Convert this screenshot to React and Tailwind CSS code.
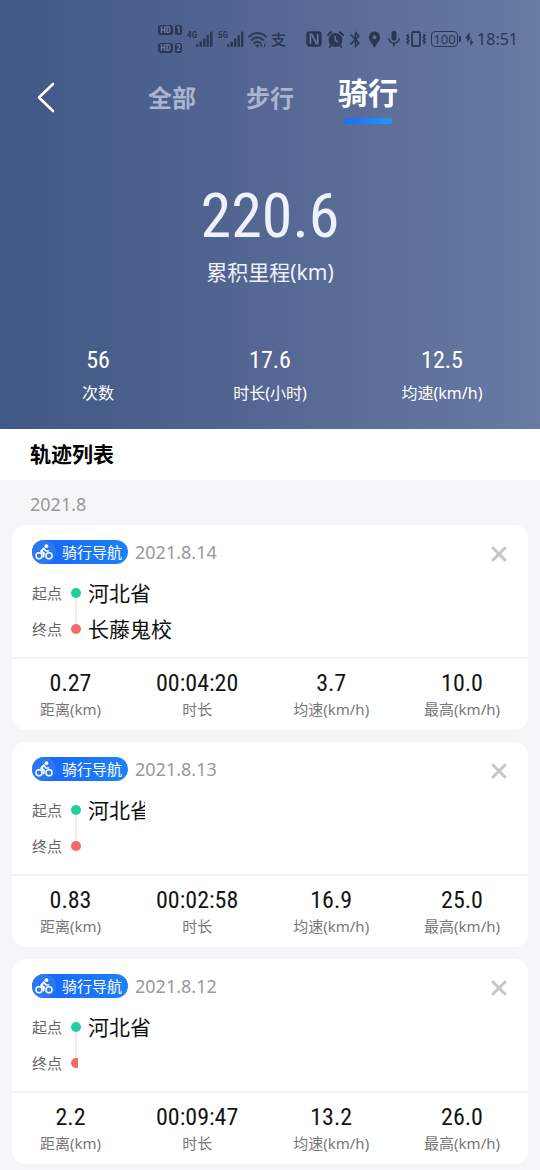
// src/pages/RideHistory.jsx
import React, { useState } from "react";
import { MdBluetooth, MdLocationPin, MdMic } from "react-icons/md";

const TABS = ["全部", "步行", "骑行"];

const TOTALS = [
  { value: "56", label: "次数" },
  { value: "17.6", label: "时长(小时)" },
  { value: "12.5", label: "均速(km/h)" },
];

const RIDES = [
  { date: "2021.8.14", from: "河北省", to: "长藤鬼校", distance: "0.27", time: "00:04:20", avg: "3.7", max: "10.0" },
  { date: "2021.8.13", from: "河北省", to: "", clipFrom: true, distance: "0.83", time: "00:02:58", avg: "16.9", max: "25.0" },
  { date: "2021.8.12", from: "河北省", to: "", clipDot: true, distance: "2.2", time: "00:09:47", avg: "13.2", max: "26.0" },
];

function HdBadge({ sim }) {
  return (
    <span className="flex gap-[2px] text-[9px] leading-[10px] font-bold text-[#6b7dab]">
      <span className="w-[15px] rounded-[3px] bg-[#2a3655] text-center font-['Roboto_Condensed',sans-serif]">HD</span>
      <span className="w-[7px] rounded-[2px] bg-[#2a3655] text-center font-['Roboto_Condensed',sans-serif]">{sim}</span>
    </span>
  );
}

function Signal({ type }) {
  return (
    <span className="flex items-start">
      <span className="w-[9px] font-['Roboto_Condensed',sans-serif] text-[9px] leading-[10px] font-bold">{type}</span>
      <svg width="17" height="18" viewBox="0 0 17 18" fill="currentColor">
        <rect x="0" y="14" width="2.4" height="3" rx="1" />
        <rect x="3.5" y="11.5" width="2.4" height="5.5" rx="1" />
        <rect x="7" y="8.5" width="2.4" height="8.5" rx="1" />
        <rect x="10.5" y="5" width="2.4" height="12" rx="1" />
        <rect x="14" y="1.5" width="2.4" height="15.5" rx="1" />
      </svg>
    </span>
  );
}

function StatusBar() {
  return (
    <div className="flex h-[62px] items-center justify-end pt-4 pr-[22px] text-[#2a3655]">
      <div className="flex flex-col gap-2">
        <HdBadge sim="1" />
        <HdBadge sim="2" />
      </div>
      <div className="ml-[5px] flex gap-[5px]">
        <Signal type="4G" />
        <Signal type="5G" />
      </div>
      <svg className="ml-1" width="19" height="17" viewBox="0 0 19 17" fill="none" stroke="currentColor" strokeWidth="2" strokeLinecap="round">
        <path d="M1.2 5.6C6 .8 13 .8 17.8 5.6M3.9 8.9c3.3-3.2 7.9-3.2 11.2 0M6.6 12c1.8-1.6 4-1.6 5.8 0" />
        <path d="M8.2 14.2h2.6l-1.3 1.6z" fill="currentColor" strokeWidth="1" />
        <path d="M14 12.4v4l-1.8-2zM16 12.4v4l1.8-2z" fill="currentColor" stroke="none" />
      </svg>
      <span className="ml-1 w-4 text-[15px] leading-4 font-medium">支</span>

      <svg className="ml-[19px]" width="16" height="16" viewBox="0 0 16 16">
        <rect x="0.3" y="0.3" width="15.4" height="15.4" rx="3.4" fill="currentColor" />
        <path d="M4.4 12.8V3.4h1.4l4.6 9.2h1.3V3.2" fill="none" stroke="#6576a2" strokeWidth="1.7" />
      </svg>
      <svg className="ml-[5px]" width="17" height="17" viewBox="0 0 17 17" fill="none" stroke="currentColor">
        <circle cx="8.5" cy="9" r="6.9" fill="currentColor" stroke="none" />
        <path d="M1 4.2C1.6 2.8 2.7 1.8 4.2 1.2M16 4.2c-.6-1.4-1.7-2.4-3.2-3M4.2 14l-1.6 2M12.8 14l1.6 2" strokeWidth="2" strokeLinecap="round" />
        <path d="M8.3 5v4.4l3 1.8" stroke="#6073a0" strokeWidth="1.5" />
      </svg>
      <MdBluetooth className="ml-[2px]" size={19} />
      <MdLocationPin size={19} />
      <MdMic size={20} />
      <svg className="ml-[2px]" width="20" height="16" viewBox="0 0 20 16" fill="none" stroke="currentColor" strokeWidth="1.8">
        <rect x="6" y="1" width="8" height="14" rx="1.5" />
        <path d="M2.5 3 1 4.6l1.8 1.7L1 8l1.8 1.7L1 11.4 2.5 13M17.5 3 19 4.6l-1.8 1.7L19 8l-1.8 1.7 1.8 1.7-1.5 1.6" strokeWidth="1.6" />
      </svg>
      <span className="ml-[5px] flex h-4 w-[27px] items-center justify-center rounded-[4px] border border-current text-[13px] leading-3">
        100
      </span>
      <span className="ml-px h-[6px] w-[2px] rounded-full bg-current" />
      <svg className="ml-1" width="9" height="16" viewBox="0 0 9 16" fill="currentColor">
        <path d="M4.4.8v5.4h2L1.6 11.4l.8-4H.2zM6.6 7v3.4h2.2L5 15.4l.8-3.6H4.4z" />
      </svg>
      <span className="ml-[3px] text-[16px] leading-5">18:51</span>
    </div>
  );
}

function Tabs({ active, onChange }) {
  return (
    <nav className="grid h-[66px] grid-cols-[1fr_auto_1fr] items-start">
      <button type="button" aria-label="返回" className="mt-5 ml-9 w-5">
        <svg width="20" height="31" viewBox="0 0 20 31" fill="none" stroke="#fff" strokeWidth="2.6" strokeLinecap="round" strokeLinejoin="round">
          <path d="M17 2 3 15.5 17 29" />
        </svg>
      </button>
      <div className="grid grid-cols-[98px_98px_98px]">
        {TABS.map((tab) => (
          <button key={tab} type="button" onClick={() => onChange(tab)} className="flex flex-col items-center pt-3">
            {tab === active ? (
              <>
                <span className="text-[30px] leading-[38px] font-bold text-white">{tab}</span>
                <span className="mt-[6px] h-[6px] w-12 rounded-[3px] bg-linear-to-r from-[#1f6bf8] to-[#2096fa]" />
              </>
            ) : (
              <span className="pt-1 text-[24px] leading-10 font-bold text-[#a9b5d3]">{tab}</span>
            )}
          </button>
        ))}
      </div>
    </nav>
  );
}

function CyclistIcon() {
  return (
    <svg width="18" height="16" viewBox="0 0 18 16" fill="none" stroke="currentColor" strokeLinecap="round" strokeLinejoin="round">
      <circle cx="4" cy="11.8" r="3" strokeWidth="1.5" />
      <circle cx="14" cy="11.8" r="3" strokeWidth="1.5" />
      <circle cx="11.4" cy="2.2" r="1.9" fill="currentColor" stroke="none" />
      <path d="M8.8 4.4 6.2 7.2l2.7 2.2-.4 3" strokeWidth="2" />
      <path d="M9.2 4.8 11 7h2.6" strokeWidth="1.5" />
    </svg>
  );
}

function Stat({ value, label }) {
  return (
    <div className="flex min-w-[60px] flex-col items-center">
      <span className="font-['Roboto_Condensed',sans-serif] text-[24px] leading-8 text-[#151515]">{value}</span>
      <span className="text-[15px] leading-5 text-[#777]">{label}</span>
    </div>
  );
}

function RideCard({ ride, onRemove }) {
  return (
    <li className="rounded-[14px] bg-white">
      <div className="flex h-[39px] items-center px-5 pt-[15px]">
        <span className="flex h-6 w-24 items-center rounded-full bg-linear-to-r from-[#1b62fb] to-[#1d82f6] text-white">
          <span className="flex h-6 w-6 items-center justify-center rounded-full bg-[#2b78f3]">
            <CyclistIcon />
          </span>
          <span className="ml-[6px] text-[15px] leading-6">骑行导航</span>
        </span>
        <span className="ml-[7px] text-[18px] leading-6 text-[#999]">{ride.date}</span>
        <button type="button" aria-label="删除" onClick={onRemove} className="mt-1 ml-auto">
          <svg width="18" height="18" viewBox="0 0 18 18" stroke="#c6c6c6" strokeWidth="3" strokeLinecap="round">
            <path d="M3 3l12 12M15 3 3 15" />
          </svg>
        </button>
      </div>

      {/* 起点 / 终点 */}
      <div className="mt-[11px] flex px-5 pb-[10px]">
        <div className="w-[30px] text-[15px] leading-9 text-[#666]">
          <p>起点</p>
          <p>终点</p>
        </div>
        <div className="ml-[9px] flex w-[10px] flex-col items-center py-[13px]">
          <span className="h-[10px] w-[10px] rounded-full bg-[#20cf9b]" />
          <span className="w-[2px] flex-1 bg-[#eee]" />
          <span className="h-[10px] w-[10px] overflow-hidden">
            <span className={`block h-full bg-[#f46a6a] ${ride.clipDot ? "w-[7px] rounded-l-full" : "w-full rounded-full"}`} />
          </span>
        </div>
        <div className="ml-[7px] text-[21px] leading-9 text-[#111]">
          <p className={`overflow-hidden whitespace-nowrap ${ride.clipFrom ? "w-[57px]" : ""}`}>{ride.from}</p>
          <p>{ride.to}</p>
        </div>
      </div>

      <div className="flex justify-between border-t-2 border-[#f3f3f5] px-7 pt-2 pb-[11px]">
        <Stat value={ride.distance} label="距离(km)" />
        <Stat value={ride.time} label="时长" />
        <Stat value={ride.avg} label="均速(km/h)" />
        <Stat value={ride.max} label="最高(km/h)" />
      </div>
    </li>
  );
}

export default function App() {
  const [tab, setTab] = useState("骑行");
  const [rides, setRides] = useState(RIDES);

  return (
    <div className="min-h-screen bg-[#f5f6f8] font-['Noto_Sans','Noto_Sans_CJK_SC',sans-serif]">
      <header className="bg-linear-to-r from-[#405885] via-[#556792] to-[#687ba3] pb-[21px]">
        <StatusBar />
        <Tabs active={tab} onChange={setTab} />

        <div className="flex flex-col items-center pt-[50px] text-[#eef2fc]">
          <span className="font-['Roboto_Condensed',sans-serif] text-[62px] leading-[76px]">220.6</span>
          <span className="text-[21px] leading-9">累积里程(km)</span>
        </div>

        <div className="mt-[52px] grid grid-cols-3 px-3 text-center text-white">
          {TOTALS.map((t) => (
            <div key={t.label} className="flex flex-col">
              <span className="font-['Roboto_Condensed',sans-serif] text-[24px] leading-9">{t.value}</span>
              <span className="text-[16px] leading-[30px]">{t.label}</span>
            </div>
          ))}
        </div>
      </header>

      <main>
        <h2 className="bg-white px-[30px] text-[21px] leading-[51px] font-bold text-black">轨迹列表</h2>
        <p className="px-[30px] pt-[3px] text-[18px] leading-[42px] text-[#999]">2021.8</p>
        <ul className="flex flex-col gap-3 px-3 pb-[6px]">
          {rides.map((ride) => (
            <RideCard key={ride.date} ride={ride} onRemove={() => setRides((list) => list.filter((r) => r !== ride))} />
          ))}
        </ul>
      </main>
    </div>
  );
}
